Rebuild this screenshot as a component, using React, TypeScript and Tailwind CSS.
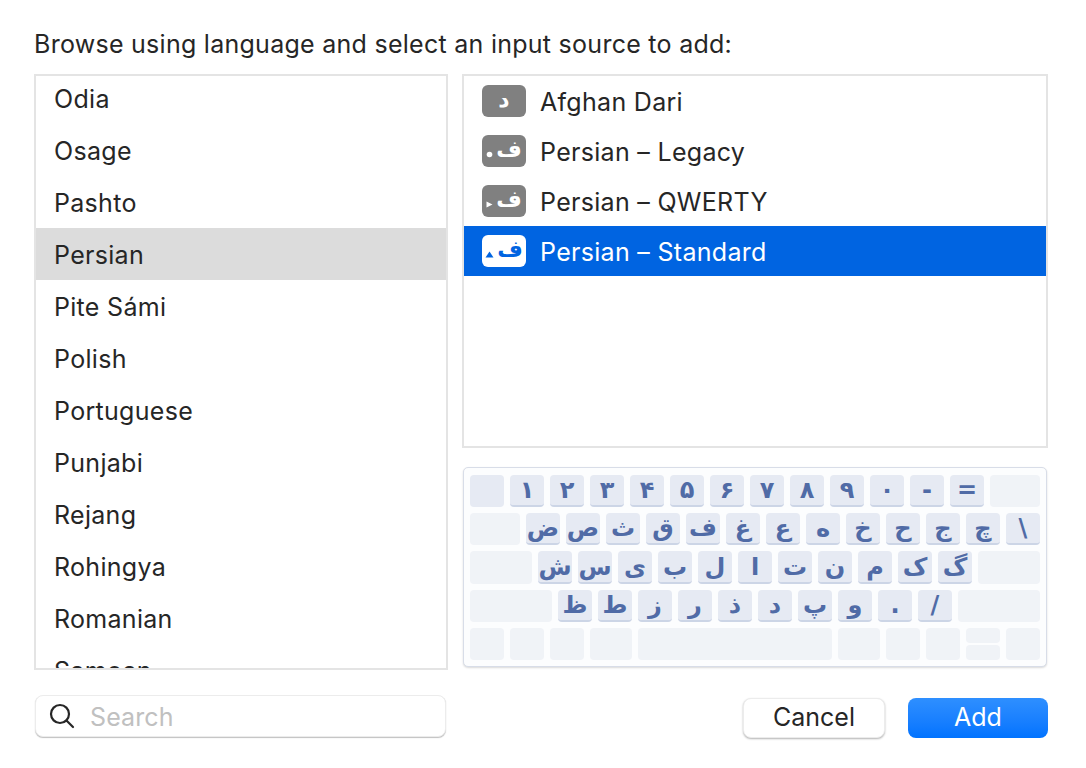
const languages = ["Odia", "Osage", "Pashto", "Persian", "Pite Sámi", "Polish", "Portuguese", "Punjabi", "Rejang", "Rohingya", "Romanian", "Samoan"]

type Source = {
  name: string,
  glyph: string,
  mark?: "dot" | "right" | "up",
  selected?: boolean
}

const sources: Source[] = [
  { name: "Afghan Dari", glyph: "د" },
  { name: "Persian – Legacy", glyph: "ف", mark: "dot" },
  { name: "Persian – QWERTY", glyph: "ف", mark: "right" },
  { name: "Persian – Standard", glyph: "ف", mark: "up", selected: true },
]

const row1 = ["۱", "۲", "۳", "۴", "۵", "۶", "۷", "۸", "۹", "۰", "-", "="]
const row2 = ["ض", "ص", "ث", "ق", "ف", "غ", "ع", "ه", "خ", "ح", "ج", "چ", "\\"]
const row3 = ["ش", "س", "ی", "ب", "ل", "ا", "ت", "ن", "م", "ک", "گ"]
const row4 = ["ظ", "ط", "ز", "ر", "ذ", "د", "پ", "و", ".", "/"]

function Key({ label }: { label: string }) {
  return (
    <div className="flex w-[34px] h-full items-center justify-center rounded-[4px] bg-[#e6eaf3] border-b-2 border-[#ccd5e6] font-['DejaVu_Sans',sans-serif] font-bold text-[24px] leading-none text-[#506ba6]">
      {label}
    </div>
  )
}

function Blank({ className }: { className: string }) {
  return <div className={"h-full rounded-[4px] bg-[#f0f3f7] " + className}></div>
}

function Mark({ type, color }: { type: Source["mark"], color: string }) {
  if (type === "dot") {
    return <svg width="7" height="7" viewBox="0 0 7 7" className="translate-y-[3px]"><circle cx="3.5" cy="3.5" r="2.8" fill={color} /></svg>
  }
  if (type === "right") {
    return <svg width="7" height="7" viewBox="0 0 7 7" className="translate-y-[3px]"><path d="M0.5 0.5 L6.5 3.5 L0.5 6.5 Z" fill={color} /></svg>
  }
  if (type === "up") {
    return <svg width="9" height="7" viewBox="0 0 9 7" className="translate-y-[3px]"><path d="M4.5 0.5 L8.5 6.5 L0.5 6.5 Z" fill={color} /></svg>
  }
  return null
}

export default function App() {
  return (
    <div className="w-[1086px] h-[768px] overflow-hidden bg-white font-['Inter',sans-serif] text-[#262626] pl-[34px] pr-[38px] pt-[28px]">
      <p className="text-[25px] tracking-[0.27px] leading-[32px] h-[46px]">Browse using language and select an input source to add:</p>

      <div className="flex justify-between h-[596px]">
        <div className="w-[414px] h-full border-2 border-[#e4e4e4] overflow-hidden">
          {languages.map((lang, i) => (
            <div key={i} className={"h-[52px] -translate-y-[4px] pl-[18px] pt-[4px] flex items-center text-[25px] tracking-[0.3px] " + (lang === "Persian" ? "bg-[#dcdcdc]" : "")}>
              {lang}
            </div>
          ))}
        </div>

        <div className="w-[586px] flex flex-col">
          <div className="h-[374px] border-2 border-[#e4e4e4]">
            {sources.map((s, i) => (
              <div key={i} className={"h-[50px] flex items-center pl-[18px] text-[25px] tracking-[0.3px] " + (s.selected ? "bg-[#0064e1] text-white" : "")}>
                <div className={"w-[44px] h-[32px] rounded-[6px] flex items-center justify-center gap-[3px] mr-[14px] font-['DejaVu_Sans',sans-serif] font-bold text-[22px] leading-none " + (s.selected ? "bg-white text-[#0064e1]" : "bg-[#808080] text-white")}>
                  {s.mark && <Mark type={s.mark} color={s.selected ? "#0064e1" : "#ffffff"} />}
                  <span className="-translate-y-[1px]">{s.glyph}</span>
                </div>
                <span className="pt-[4px]">{s.name}</span>
              </div>
            ))}
          </div>

          <div className="mt-[19px] mx-[1px] h-[200px] rounded-[5px] bg-[#fcfdfe] border border-[#d8dde8] shadow-[0_1px_2px_rgba(0,0,0,0.15)] px-[6px] pt-[7px] flex flex-col gap-[6px]">
            <div className="flex gap-[6px] h-[32px]">
              <Blank className="w-[34px] !bg-[#e6eaf3]" />
              {row1.map((k, i) => <Key key={i} label={k} />)}
              <Blank className="w-[50px]" />
            </div>
            <div className="flex gap-[6px] h-[32px]">
              <Blank className="w-[50px]" />
              {row2.map((k, i) => <Key key={i} label={k} />)}
            </div>
            <div className="flex gap-[6px] h-[33px]">
              <Blank className="w-[62px]" />
              {row3.map((k, i) => <Key key={i} label={k} />)}
              <Blank className="w-[62px]" />
            </div>
            <div className="flex gap-[6px] h-[32px]">
              <Blank className="w-[82px]" />
              {row4.map((k, i) => <Key key={i} label={k} />)}
              <Blank className="w-[82px]" />
            </div>
            <div className="flex gap-[6px] h-[32px]">
              <Blank className="w-[34px]" />
              <Blank className="w-[34px]" />
              <Blank className="w-[34px]" />
              <Blank className="w-[42px]" />
              <Blank className="w-[194px]" />
              <Blank className="w-[42px]" />
              <Blank className="w-[34px]" />
              <Blank className="w-[34px]" />
              <div className="w-[34px] h-full flex flex-col gap-[2px]">
                <Blank className="!h-[15px]" />
                <Blank className="!h-[15px]" />
              </div>
              <Blank className="w-[34px]" />
            </div>
          </div>
        </div>
      </div>

      <div className="flex justify-between items-start mt-[25px]">
        <div className="w-[411px] h-[42px] ml-[1px] rounded-[8px] bg-white border border-[#ececec] shadow-[0_1px_1px_rgba(0,0,0,0.25)] flex items-center pl-[13px] text-[25px] tracking-[0.1px] text-[#c0c0c0]">
          <svg width="26" height="26" viewBox="0 0 26 26" fill="none" stroke="#262626" strokeWidth="2.2" strokeLinecap="round" className="mr-[15px]">
            <circle cx="11" cy="11" r="9" />
            <path d="M17.5 17.5 L24 24" />
          </svg>
          <span className="pt-[4px]">Search</span>
        </div>

        <div className="flex gap-[23px] mt-[3px]">
          <button className="w-[142px] h-[40px] rounded-[8px] bg-white border border-[#ececec] shadow-[0_1px_2px_rgba(0,0,0,0.3)] text-[25px] text-[#262626]">Cancel</button>
          <button className="w-[140px] h-[40px] rounded-[8px] bg-gradient-to-b from-[#2e8fff] to-[#0073ff] text-[25px] text-white">Add</button>
        </div>
      </div>
    </div>
  )
}
